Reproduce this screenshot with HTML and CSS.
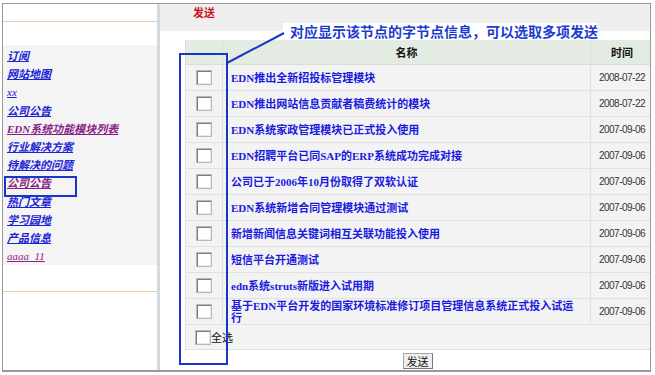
FILE: index.html
```html
<!DOCTYPE html>
<html lang="zh-CN">
<head>
  <meta charset="UTF-8">
  <title>信息发送</title>
  <link rel="stylesheet" href="styles.css">
</head>
<body>
  <div class="frame">
    <div class="sidebar">
      <div class="side-top"></div>
      <div class="side-gap"></div>
      <div class="side-menu">
        <a href="#">订阅</a>
        <a href="#">网站地图</a>
        <a href="#" class="plain">xx</a>
        <a href="#">公司公告</a>
        <a href="#" class="visited">EDN系统功能模块列表</a>
        <a href="#">行业解决方案</a>
        <a href="#">待解决的问题</a>
        <a href="#" class="visited">公司公告</a>
        <a href="#">热门文章</a>
        <a href="#">学习园地</a>
        <a href="#">产品信息</a>
        <a href="#" class="visited plain">aaaa_11</a>
      </div>
      <div class="side-bottom"></div>
    </div>

    <div class="main">
      <div class="toolbar"><span class="send-link">发送</span></div>

      <table class="list">
        <tr>
          <th class="col-check"></th>
          <th class="col-name">名称</th>
          <th class="col-time">时间</th>
        </tr>
        <tr><td class="col-check"><input type="checkbox"></td><td class="col-name"><a href="#">EDN推出全新招投标管理模块</a></td><td class="col-time">2008-07-22</td></tr>
        <tr><td class="col-check"><input type="checkbox"></td><td class="col-name"><a href="#">EDN推出网站信息贡献者稿费统计的模块</a></td><td class="col-time">2008-07-22</td></tr>
        <tr><td class="col-check"><input type="checkbox"></td><td class="col-name"><a href="#">EDN系统家政管理模块已正式投入使用</a></td><td class="col-time">2007-09-06</td></tr>
        <tr><td class="col-check"><input type="checkbox"></td><td class="col-name"><a href="#">EDN招聘平台已同SAP的ERP系统成功完成对接</a></td><td class="col-time">2007-09-06</td></tr>
        <tr><td class="col-check"><input type="checkbox"></td><td class="col-name"><a href="#">公司已于2006年10月份取得了双软认证</a></td><td class="col-time">2007-09-06</td></tr>
        <tr><td class="col-check"><input type="checkbox"></td><td class="col-name"><a href="#">EDN系统新增合同管理模块通过测试</a></td><td class="col-time">2007-09-06</td></tr>
        <tr><td class="col-check"><input type="checkbox"></td><td class="col-name"><a href="#">新增新闻信息关键词相互关联功能投入使用</a></td><td class="col-time">2007-09-06</td></tr>
        <tr><td class="col-check"><input type="checkbox"></td><td class="col-name"><a href="#">短信平台开通测试</a></td><td class="col-time">2007-09-06</td></tr>
        <tr><td class="col-check"><input type="checkbox"></td><td class="col-name"><a href="#">edn系统struts新版进入试用期</a></td><td class="col-time">2007-09-06</td></tr>
        <tr><td class="col-check"><input type="checkbox"></td><td class="col-name"><a href="#">基于EDN平台开发的国家环境标准修订项目管理信息系统正式投入试运行</a></td><td class="col-time">2007-09-06</td></tr>
        <tr class="all-row">
          <td colspan="3"><label class="check-all"><input type="checkbox">全选</label></td>
        </tr>
      </table>

      <div class="actions"><button type="button">发送</button></div>
    </div>

    <!-- 标注 -->
    <div class="mark mark-side"></div>
    <div class="mark mark-checks"></div>
    <div class="note">对应显示该节点的字节点信息，可以选取多项发送</div>
    <svg class="note-line" width="647" height="366">
      <line x1="224" y1="59" x2="281" y2="29" stroke="#1836c8" stroke-width="2"/>
    </svg>
  </div>
</body>
</html>
```

FILE: styles.css
```css
body {
  margin: 0;
  padding: 3px 0 0 2px;
  background-color: #fff;
  font-family: "Liberation Serif", "Noto Sans CJK SC", serif;
  font-size: 11px;
}
.frame {
  position: relative;
  display: flex;
  width: 649px;
  height: 369px;
  box-sizing: border-box;
  border: 1px solid #9a9a9a;
  border-bottom-width: 2px;
  overflow: hidden;
}

/* 左侧菜单 */
.sidebar {
  width: 154px;
  flex: none;
  border-right: 3px solid #d3d9e1;
  background-color: #fff;
}
.side-top {
  height: 17px;
  border-bottom: 1px solid #ecc9aa;
}
.side-gap {
  height: 23px;
}
.side-menu {
  height: 218px;
  padding: 2px 0 0 4px;
  background-color: #f4f4f4;
}
.side-menu a {
  display: block;
  height: 18.2px;
  line-height: 18.2px;
  color: #1a22d6;
  font-weight: bold;
  font-style: italic;
  text-decoration: underline;
}
.side-menu a.visited {
  color: #8a1f86;
}
.side-menu a.plain {
  font-weight: normal;
}
.side-bottom {
  height: 26px;
  border-bottom: 1px solid #ecc9aa;
}

/* 右侧内容 */
.main {
  flex: 1;
  min-width: 0;
  display: flex;
  flex-direction: column;
}
.toolbar {
  height: 27px;
  padding: 2px 0 0 33px;
  box-sizing: border-box;
  background-color: #efefef;
}
.send-link {
  color: #c8141e;
  font-weight: bold;
  font-family: "Noto Sans CJK SC", sans-serif;
  line-height: 13px;
}
.list {
  margin: 9px 0 0 25px;
  width: 465px;
  border-collapse: collapse;
  table-layout: fixed;
}
.list th {
  height: 24px;
  padding: 0;
  background-color: #e3ebe3;
  border: 1px solid #d5dfd5;
  border-top: none;
  color: #111;
  font-family: "Noto Sans CJK SC", sans-serif;
  font-weight: bold;
  text-align: center;
}
.list td {
  height: 25px;
  padding: 0;
  background-color: #f3f3f3;
  border: 1px solid #e1e1e1;
}
.list .col-check {
  width: 36px;
  text-align: center;
}
.list .col-name {
  width: 367px;
}
.list td.col-name {
  padding: 0 16px 0 8px;
  line-height: 12px;
}
.list .col-time {
  width: 62px;
}
.list td.col-time {
  text-align: center;
  color: #333;
  font-family: "Liberation Sans", sans-serif;
  font-size: 10px;
  letter-spacing: -0.5px;
  white-space: nowrap;
}
.list td.col-name a {
  color: #1a1ae0;
  font-weight: bold;
  text-decoration: none;
}
.list .all-row td {
  height: 24px;
  padding-left: 9px;
}
.check-all {
  display: flex;
  align-items: center;
  color: #111;
  font-family: "Noto Sans CJK SC", sans-serif;
}
.check-all input {
  margin-right: 1px;
}

input[type="checkbox"] {
  appearance: none;
  width: 16px;
  height: 15px;
  margin: 0;
  vertical-align: middle;
  box-sizing: border-box;
  border: 1px solid #b9b9b9;
  background-color: #fff;
  box-shadow: inset 1px 1px 0 #7c7c7c, inset -1px -1px 0 #e8e8e8;
}

.actions {
  margin-left: 25px;
  padding-top: 3px;
  text-align: center;
}
.actions button {
  width: 30px;
  height: 16px;
  padding: 0;
  background-color: #eeeeee;
  border: 1px solid #a5a5a5;
  border-right-color: #777;
  border-bottom-color: #777;
  color: #111;
  font-family: "Noto Sans CJK SC", sans-serif;
  font-size: 11px;
  line-height: 13px;
}

/* 标注层 */
.mark {
  position: absolute;
  box-sizing: border-box;
  border: 2px solid #1836c8;
}
.mark-side {
  left: 1px;
  top: 172px;
  width: 73px;
  height: 21px;
}
.mark-checks {
  left: 176px;
  top: 49px;
  width: 49px;
  height: 312px;
}
.note {
  position: absolute;
  left: 280px;
  top: 19px;
  width: 314px;
  height: 16px;
  padding-left: 7px;
  box-sizing: border-box;
  background-color: #fff;
  color: #1c3cd0;
  font-family: "Noto Sans CJK SC", sans-serif;
  font-size: 14px;
  font-weight: bold;
  line-height: 16px;
  white-space: nowrap;
}
.note-line {
  position: absolute;
  left: 0;
  top: 0;
  pointer-events: none;
}
```
